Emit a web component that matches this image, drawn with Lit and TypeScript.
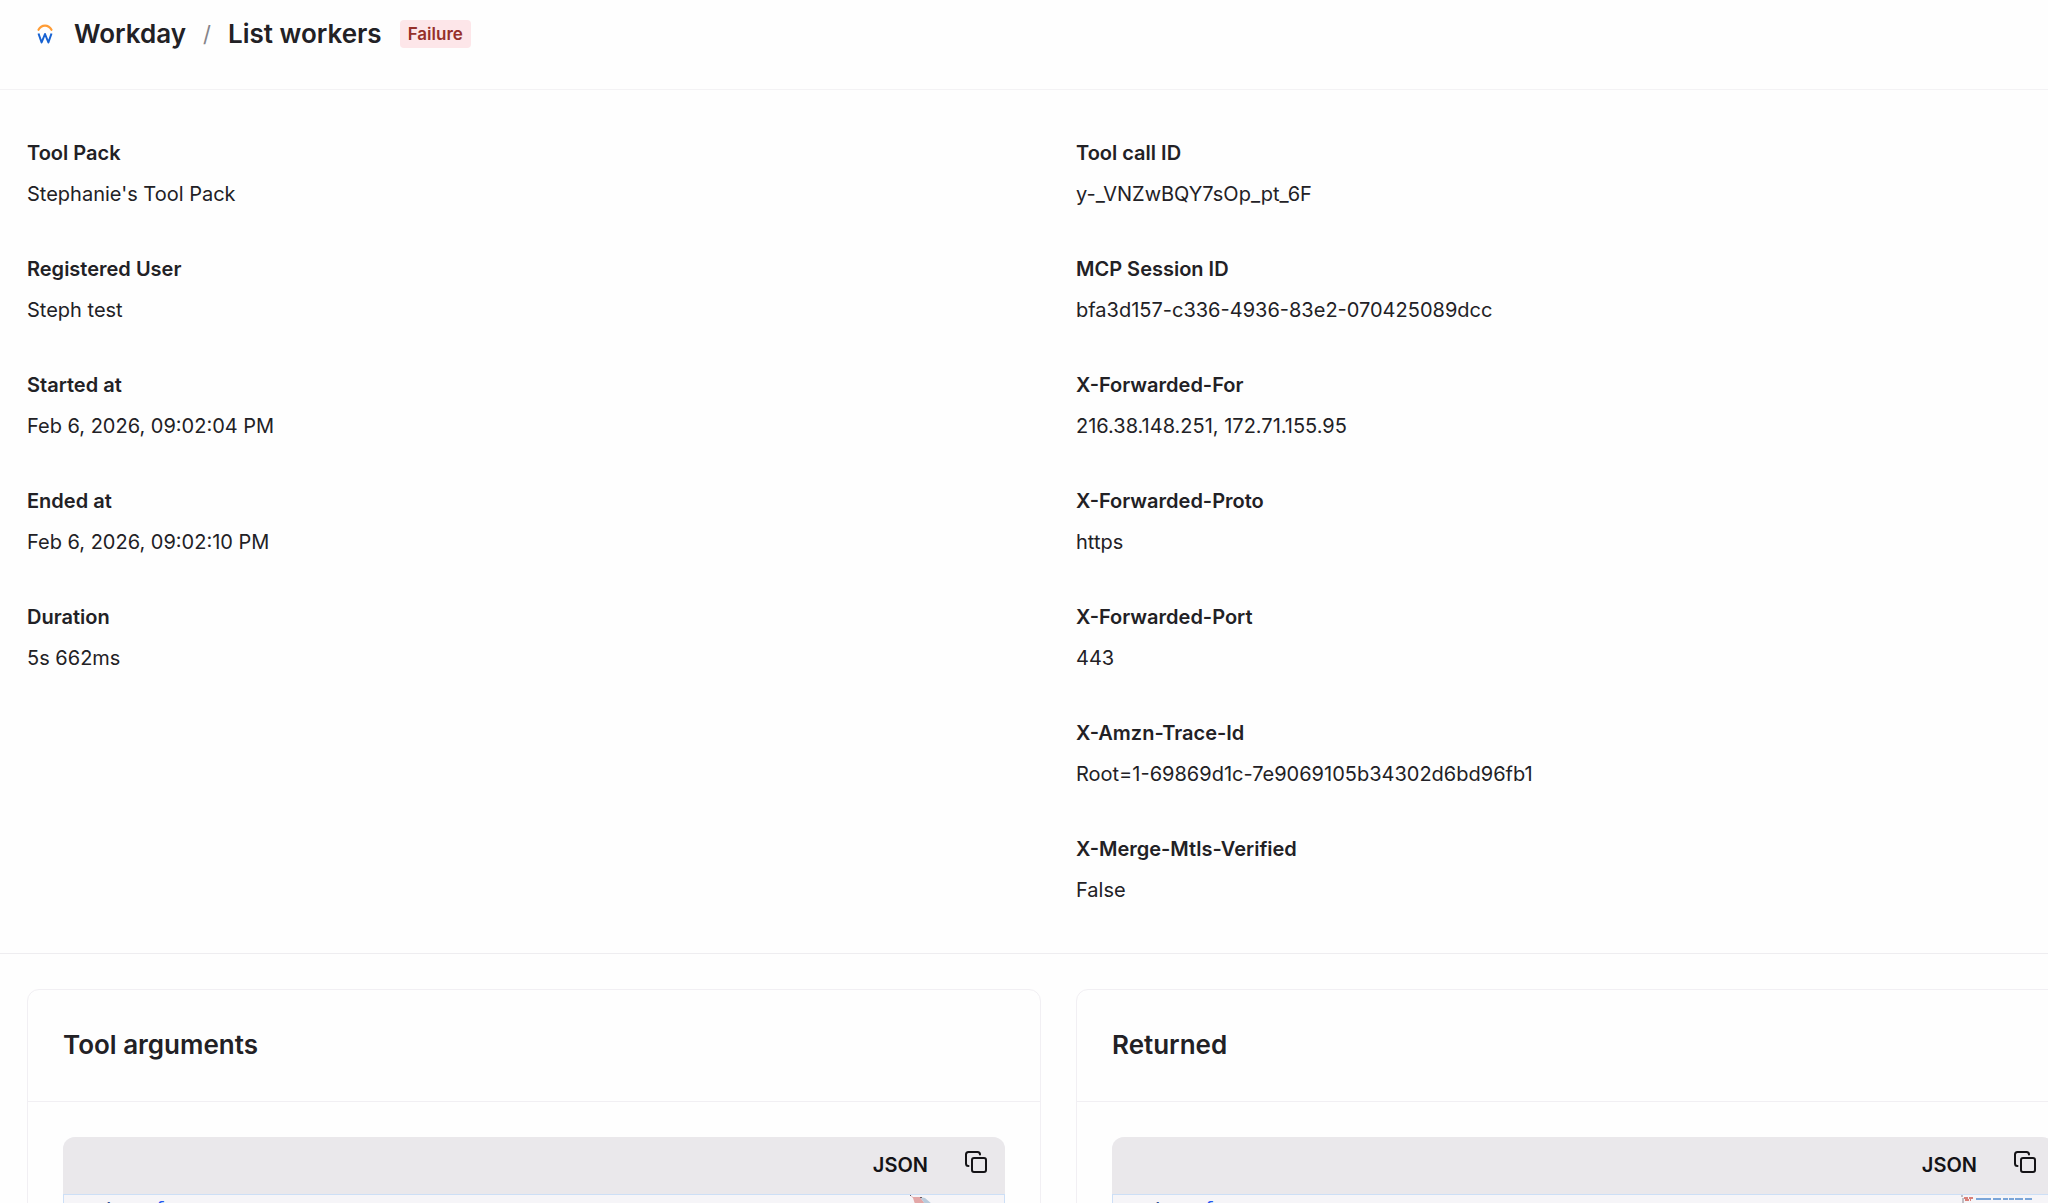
import { LitElement, html, css, svg } from "lit";
import { customElement, property } from "lit/decorators.js";

interface Field {
  label: string;
  value: string;
}

const CALL_FIELDS: Field[] = [
  { label: "Tool Pack", value: "Stephanie's Tool Pack" },
  { label: "Registered User", value: "Steph test" },
  { label: "Started at", value: "Feb 6, 2026, 09:02:04 PM" },
  { label: "Ended at", value: "Feb 6, 2026, 09:02:10 PM" },
  { label: "Duration", value: "5s 662ms" },
];

const REQUEST_FIELDS: Field[] = [
  { label: "Tool call ID", value: "y-_VNZwBQY7sOp_pt_6F" },
  { label: "MCP Session ID", value: "bfa3d157-c336-4936-83e2-070425089dcc" },
  { label: "X-Forwarded-For", value: "216.38.148.251, 172.71.155.95" },
  { label: "X-Forwarded-Proto", value: "https" },
  { label: "X-Forwarded-Port", value: "443" },
  { label: "X-Amzn-Trace-Id", value: "Root=1-69869d1c-7e9069105b34302d6bd96fb1" },
  { label: "X-Merge-Mtls-Verified", value: "False" },
];

@customElement("field-list")
export class FieldList extends LitElement {
  @property({ attribute: false }) fields: Field[] = [];

  static styles = css`
    :host {
      display: block;
    }
    .list {
      display: flex;
      flex-direction: column;
      gap: 43px;
      margin: 0;
      font-size: 20px;
      line-height: 32px;
    }
    .field {
      display: flex;
      flex-direction: column;
      gap: 9px;
    }
    .label {
      font-weight: 600;
    }
    .value {
      margin: 0;
    }
  `;

  render() {
    return html`<dl class="list">
      ${this.fields.map(
        (f) => html`<div class="field">
          <dt class="label">${f.label}</dt>
          <dd class="value">${f.value}</dd>
        </div>`
      )}
    </dl>`;
  }
}

@customElement("json-card")
export class JsonCard extends LitElement {
  @property() heading = "";
  @property() preview: "glyph" | "lines" = "lines";

  static styles = css`
    :host {
      display: block;
      min-width: 0;
    }
    .card {
      border: 1px solid #f1eff3;
      border-radius: 12px;
    }
    .title {
      margin: 0;
      padding: 35px 35px 37px;
      border-bottom: 1px solid #f1eff3;
      font-size: 26px;
      font-weight: 600;
      line-height: 39px;
    }
    .body {
      padding: 35px;
    }
    .editor {
      border-radius: 12px;
      overflow: hidden;
      background: #f6f5f8;
    }
    .bar {
      display: flex;
      align-items: center;
      justify-content: flex-end;
      gap: 36px;
      height: 55px;
      padding: 0 17px 2px 0;
      background: #eae8eb;
      color: #141316;
      font-size: 20px;
      font-weight: 600;
    }
    .copy {
      display: flex;
      margin: 0 0 6px;
      padding: 0;
      border: 0;
      background: none;
      color: inherit;
      cursor: pointer;
    }
    .code {
      display: grid;
      grid-template-columns: 50px 1fr auto;
      height: 300px;
      border: 1px solid #cddff6;
      font-family: "Liberation Mono", monospace;
      font-size: 19px;
      line-height: 28px;
    }
    .line-number {
      text-align: right;
      color: #2c4b8c;
    }
    .source {
      padding-left: 40px;
      color: #2457f0;
    }
    .minimap {
      display: block;
    }
  `;

  private renderMinimap() {
    if (this.preview === "glyph") {
      return html`<svg class="minimap" width="94" height="60" viewBox="0 0 94 60" aria-hidden="true">
        ${svg`<path d="M0 0l3 2h7l5 7H5L3 3z" fill="#e3a7a7"/>
        <path d="M10 2l5 1 7 6h-7z" fill="#b9cbdc"/>
        <path d="M0 0h1v1H0zM10 2h2v1h-2z" fill="#6d5c62"/>`}
      </svg>`;
    }
    return html`<svg class="minimap" width="92" height="60" viewBox="0 0 92 60" aria-hidden="true">
      ${svg`<path d="M1 0v2M2 3v5" stroke="#8d8690" stroke-width="1"/>
      <path d="M3 3h9M4 5h6" stroke="#d98079" stroke-width="2" stroke-dasharray="4 1"/>
      <path d="M15 4h15M32 4h8M42 4h5M48 4h5M54 4h8M64 4h7" stroke="#7aa5d8" stroke-width="2"/>`}
    </svg>`;
  }

  render() {
    return html`<section class="card">
      <h2 class="title">${this.heading}</h2>
      <div class="body">
        <div class="editor">
          <div class="bar">
            <span>JSON</span>
            <button class="copy" type="button" aria-label="Copy">
              <svg width="24" height="24" viewBox="0 0 24 24" fill="none" stroke="currentColor" stroke-width="2" stroke-linejoin="round" aria-hidden="true">
                <rect x="8" y="8" width="14" height="14" rx="2"></rect>
                <path d="M4.500 16C3 16 2 15 2 13.500V4.500C2 3 3 2 4.500 2H13.500C15 2 16 3 16 4.500" stroke-linecap="round"></path>
              </svg>
            </button>
          </div>
          <div class="code">
            <span class="line-number">1</span>
            <span class="source">{</span>
            ${this.renderMinimap()}
          </div>
        </div>
      </div>
    </section>`;
  }
}

@customElement("app-root")
export class AppRoot extends LitElement {
  static styles = css`
    :host {
      display: block;
      height: 100vh;
      overflow: hidden;
      background: #fefefe;
      color: #222125;
      font-family: Inter, "Liberation Sans", sans-serif;
    }
    .header {
      display: flex;
      align-items: center;
      height: 68px;
      padding: 0 27px 21px;
      border-bottom: 1px solid #f3f2f4;
    }
    .logo {
      display: block;
      margin: 0 18px 0 5px;
    }
    .crumbs {
      display: flex;
      align-items: center;
      gap: 17px;
      font-size: 26px;
      font-weight: 600;
      line-height: 36px;
    }
    .crumb-link {
      color: inherit;
      text-decoration: none;
    }
    .slash {
      color: #858489;
      font-size: 22px;
      font-weight: 400;
    }
    .page-title {
      margin: 0;
      font: inherit;
    }
    .badge {
      margin-left: 18px;
      padding: 0 8px;
      border-radius: 4px;
      background: #fde6e9;
      color: #96302a;
      font-size: 17px;
      font-weight: 600;
      line-height: 28px;
    }
    .columns {
      display: grid;
      grid-template-columns: 1fr 1fr;
      gap: 35px;
      width: calc(100% + 15px);
      padding: 0 27px;
    }
    .details {
      padding-top: 47px;
      padding-bottom: 47px;
      border-bottom: 1px solid #eeedf0;
    }
    .cards {
      padding-top: 35px;
    }
  `;

  render() {
    return html`
      <header class="header">
        <svg class="logo" width="24" height="24" viewBox="0 0 24 24" aria-hidden="true">
          <path d="M6.500 7.800C9.500 2.300 16.500 2.300 19.500 7.800" fill="none" stroke="#ff9c35" stroke-width="2.200" stroke-linecap="round"></path>
          <path d="M6.500 11.500L9.600 20.500L13 12L16.400 20.500L19.500 11.500" fill="none" stroke="#1762d2" stroke-width="2" stroke-linejoin="round"></path>
        </svg>
        <nav class="crumbs" aria-label="Breadcrumb">
          <a class="crumb-link" href="#workday">Workday</a>
          <span class="slash">/</span>
          <h1 class="page-title">List workers</h1>
        </nav>
        <span class="badge">Failure</span>
      </header>
      <main>
        <div class="columns details">
          <field-list .fields=${CALL_FIELDS}></field-list>
          <field-list .fields=${REQUEST_FIELDS}></field-list>
        </div>
        <div class="columns cards">
          <json-card heading="Tool arguments" preview="glyph"></json-card>
          <json-card heading="Returned" preview="lines"></json-card>
        </div>
      </main>
    `;
  }
}
